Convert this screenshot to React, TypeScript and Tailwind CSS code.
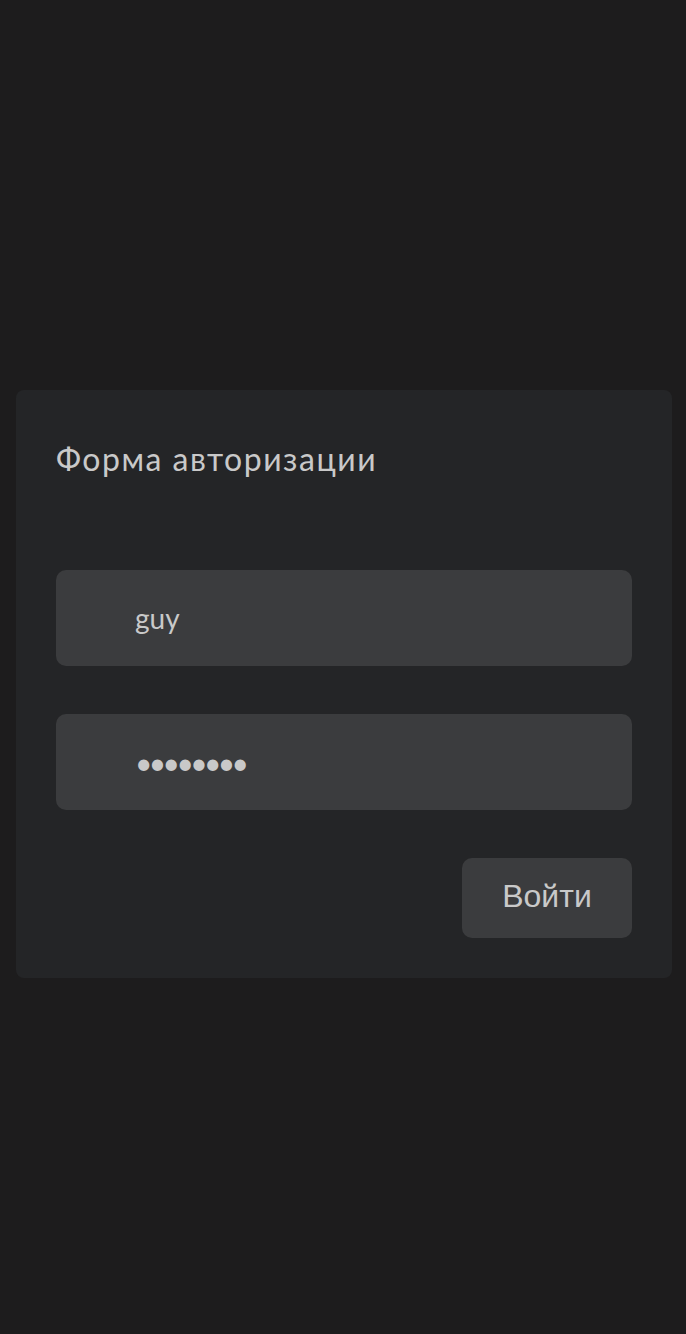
export default function App() {
  return (
    <div className="min-h-[1334px] bg-[#1d1c1d] pl-4 pr-[14px] pt-[390px] font-['Lato','Noto_Sans',sans-serif]">
      <form className="rounded-lg bg-[#242527] px-10 pt-[45px] pb-10" onSubmit={(e) => e.preventDefault()}>
        <h1 className="text-[32px] leading-[48px] tracking-[1.5px] text-[#c9c9c9]">Форма авторизации</h1>
        <div className="mt-[87px] flex flex-col gap-12">
          <input
            className="h-24 w-full rounded-[10px] bg-[#3b3c3e] pl-[79px] text-[28px] text-[#c9c9c9] outline-none"
            defaultValue="guy"
          />
          <input
            type="password"
            className="h-24 w-full rounded-[10px] bg-[#3b3c3e] pl-[79px] text-[30px] tracking-[-3.6px] text-[#c9c9c9] outline-none"
            defaultValue="password"
          />
        </div>
        <div className="mt-12 flex justify-end">
          <button
            type="submit"
            className="h-20 w-[170px] rounded-[10px] bg-[#3b3c3e] pb-1 font-['Liberation_Sans',Arial,sans-serif] text-[32px] text-[#c9c9c9]"
          >
            Войти
          </button>
        </div>
      </form>
    </div>
  );
}
